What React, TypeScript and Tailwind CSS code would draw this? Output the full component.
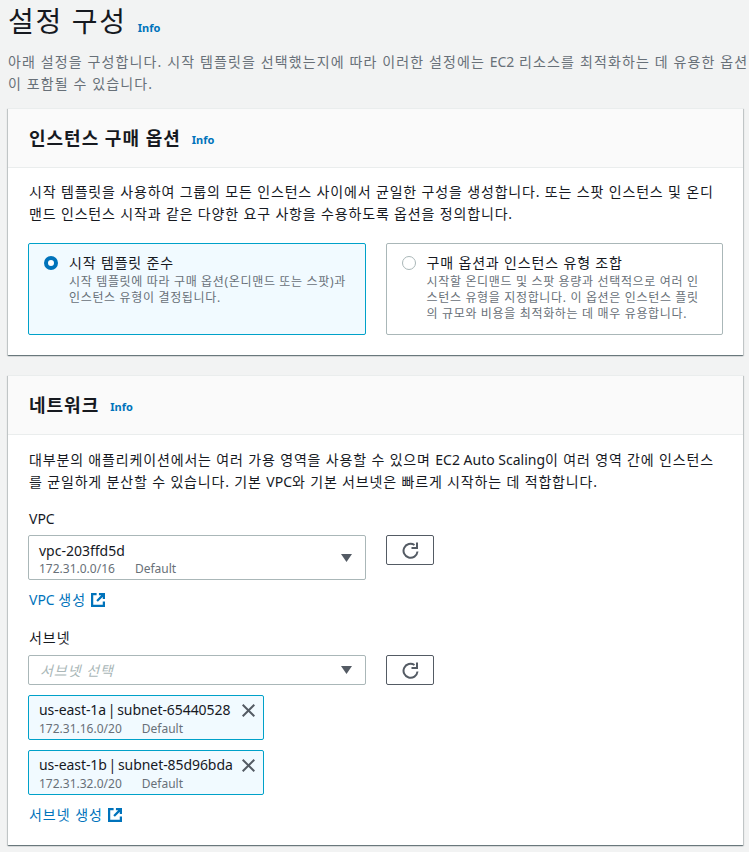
import { ReactNode } from 'react';

// ── Icons ─────────────────────────────────────────────────────────────────────

function RefreshIcon() {
  return (
    <svg width="17" height="17" viewBox="0 0 17 17" fill="none" stroke="#545b64" strokeWidth="2">
      <path d="M15.5 9.5A7 7 0 1 1 12.5 3" />
      <path d="M15 .5V6H9.5" />
    </svg>
  );
}

function ExternalIcon() {
  return (
    <svg width="14" height="14" viewBox="0 0 15 15" fill="none" stroke="#0073bb" strokeWidth="2.4">
      <path d="M6 1.2H1.2v12.6h12.6V9" />
      <path d="M8.5 1.2h5.3v5.3M13.8 1.2 6.5 8.5" />
    </svg>
  );
}

function CaretIcon() {
  return (
    <svg width="11" height="8" viewBox="0 0 11 8" fill="#545b64">
      <path d="M0 0h11L5.5 8z" />
    </svg>
  );
}

function CloseIcon() {
  return (
    <svg width="13" height="13" viewBox="0 0 13 13" fill="none" stroke="#545b64" strokeWidth="2">
      <path d="M.7.7l11.6 11.6M12.3.7.7 12.3" />
    </svg>
  );
}

// ── Sub-components ────────────────────────────────────────────────────────────

function Info({ className }: { className: string }) {
  return <span className={`text-[11px] font-bold text-[#0073bb] ${className}`}>Info</span>;
}

function Card({ title, infoClass, children }: { title: string; infoClass: string; children: ReactNode }) {
  return (
    <section className="mx-2 w-[735px] bg-white border-t border-[#eaeded] shadow-[0_1px_1px_0_rgba(0,28,36,0.4),1px_1px_1px_0_rgba(0,28,36,0.15),-1px_1px_1px_0_rgba(0,28,36,0.15)]">
      <div className="h-[59px] px-[21px] flex items-center bg-[#fafafa] border-b border-[#eaeded]">
        <h2 className="text-[18px] font-bold text-[#16191f] leading-[24px] tracking-[0.055em]">{title}</h2>
        <Info className={infoClass} />
      </div>
      {children}
    </section>
  );
}

function RadioTile({ selected, title, desc }: { selected: boolean; title: string; desc: string[] }) {
  return (
    <div className={`w-[338px] h-[92px] rounded-[2px] border flex pl-[15px] pt-[9px] ${selected ? 'bg-[#f1faff] border-[#00a1c9]' : 'bg-white border-[#aab7b8]'}`}>
      {selected ? (
        <span className="mt-[3px] w-[14px] h-[14px] rounded-full border-[4px] border-[#0073bb] bg-white shrink-0" />
      ) : (
        <span className="mt-[3px] w-[14px] h-[14px] rounded-full border border-[#aab7b8] bg-white shrink-0" />
      )}
      <div className="ml-[11px]">
        <div className="text-[14px] leading-[20px] text-[#16191f] tracking-[0.06em] mb-[1px]">{title}</div>
        {desc.map(line => (
          <div key={line} className="text-[12px] leading-[16px] text-[#687078] whitespace-nowrap tracking-[0.055em]">{line}</div>
        ))}
      </div>
    </div>
  );
}

function RefreshButton() {
  return (
    <button className="ml-[20px] w-[48px] h-[30px] rounded-[2px] border border-[#545b64] bg-white flex items-center justify-center">
      <RefreshIcon />
    </button>
  );
}

function SubnetToken({ name, cidr }: { name: string; cidr: string }) {
  return (
    <div className="w-[236px] h-[45px] rounded-[2px] border border-[#00a1c9] bg-[#f1faff] pl-[10px] flex">
      <div className="w-[203px] pt-[3px]">
        <div className="text-[14px] leading-[22px] text-[#16191f] whitespace-nowrap [word-spacing:-1.8px] tracking-[-0.07px]">{name}</div>
        <div className="mt-[1px] text-[12px] leading-[14px] text-[#687078] flex gap-[20px]">
          <span>{cidr}</span>
          <span>Default</span>
        </div>
      </div>
      <span className="mt-[8px]"><CloseIcon /></span>
    </div>
  );
}

// ── Main page ─────────────────────────────────────────────────────────────────

export default function App() {
  return (
    <div className="w-[749px] h-[852px] overflow-hidden bg-[#f2f3f3] font-['Noto_Sans','Noto_Sans_CJK_KR',sans-serif]">
      {/* Page header */}
      <div className="h-[108px] px-2 pt-[1px]">
        <div className="flex items-center h-[40px]">
          <h1 className="text-[28px] leading-[40px] text-[#16191f] tracking-[0.06em]">설정 구성</h1>
          <Info className="ml-[11px] mt-[14px]" />
        </div>
        <p className="mt-[10px] text-[14px] leading-[22px] text-[#687078] whitespace-nowrap tracking-[0.08em]">
          아래 설정을 구성합니다. 시작 템플릿을 선택했는지에 따라 이러한 설정에는 <span className="tracking-normal">EC2</span> 리소스를 최적화하는 데 유용한 옵션<br />
          이 포함될 수 있습니다.
        </p>
      </div>

      {/* Purchase options */}
      <Card title="인스턴스 구매 옵션" infoClass="ml-[11px] mt-[4px]">
        <div className="px-[20px] pt-[13px] h-[187px]">
          <p className="pl-[1px] text-[14px] leading-[22px] text-[#16191f] whitespace-nowrap tracking-[0.06em]">
            시작 템플릿을 사용하여 그룹의 모든 인스턴스 사이에서 균일한 구성을 생성합니다. 또는 스팟 인스턴스 및 온디<br />
            맨드 인스턴스 시작과 같은 다양한 요구 사항을 수용하도록 옵션을 정의합니다.
          </p>
          <div className="mt-[18px] flex gap-[20px]">
            <RadioTile
              selected
              title="시작 템플릿 준수"
              desc={['시작 템플릿에 따라 구매 옵션(온디맨드 또는 스팟)과', '인스턴스 유형이 결정됩니다.']}
            />
            <RadioTile
              selected={false}
              title="구매 옵션과 인스턴스 유형 조합"
              desc={['시작할 온디맨드 및 스팟 용량과 선택적으로 여러 인', '스턴스 유형을 지정합니다. 이 옵션은 인스턴스 플릿', '의 규모와 비용을 최적화하는 데 매우 유용합니다.']}
            />
          </div>
        </div>
      </Card>

      <div className="h-[20px]" />

      {/* Network */}
      <Card title="네트워크" infoClass="ml-[11px] mt-[4px]">
        <div className="px-[20px] pt-[14px] h-[410px]">
          <p className="pl-[1px] text-[14px] leading-[22px] text-[#16191f] whitespace-nowrap tracking-[0.06em]">
            대부분의 애플리케이션에서는 여러 가용 영역을 사용할 수 있으며 <span className="tracking-normal">EC2 Auto Scaling</span>이 여러 영역 간에 인스턴스<br />
            를 균일하게 분산할 수 있습니다. 기본 <span className="tracking-normal">VPC</span>와 기본 서브넷은 빠르게 시작하는 데 적합합니다.
          </p>

          <label className="block pl-[1px] mt-[16px] text-[14px] leading-[20px] text-[#16191f]">VPC</label>
          <div className="mt-[6px] flex items-start">
            <div className="w-[338px] h-[45px] rounded-[2px] border border-[#aab7b8] bg-white pl-[10px] pr-[13px] flex items-center justify-between">
              <div>
                <div className="text-[14px] leading-[22px] text-[#16191f]">vpc-203ffd5d</div>
                <div className="text-[12px] leading-[14px] text-[#687078] flex gap-[20px]">
                  <span>172.31.0.0/16</span>
                  <span>Default</span>
                </div>
              </div>
              <CaretIcon />
            </div>
            <RefreshButton />
          </div>
          <div className="mt-[10px] pl-[1px] flex items-center gap-[5px] text-[14px] leading-[20px] text-[#0073bb]">
            <span>VPC <span className="tracking-[0.07em]">생성</span></span> <ExternalIcon />
          </div>

          <label className="block pl-[1px] mt-[18px] text-[14px] leading-[20px] text-[#16191f] tracking-[0.07em]">서브넷</label>
          <div className="mt-[7px] flex items-start">
            <div className="w-[338px] h-[30px] rounded-[2px] border border-[#aab7b8] bg-white pl-[11px] pr-[13px] flex items-center justify-between">
              <span className="text-[14px] italic text-[#aab7b8] tracking-[0.07em]">서브넷 선택</span>
              <CaretIcon />
            </div>
            <RefreshButton />
          </div>

          <div className="mt-[10px] flex flex-col gap-[10px]">
            <SubnetToken name="us-east-1a | subnet-65440528" cidr="172.31.16.0/20" />
            <SubnetToken name="us-east-1b | subnet-85d96bda" cidr="172.31.32.0/20" />
          </div>
          <div className="mt-[10px] pl-[1px] flex items-center gap-[5px] text-[14px] leading-[20px] text-[#0073bb] tracking-[0.07em]">
            서브넷 생성 <ExternalIcon />
          </div>
        </div>
      </Card>
    </div>
  );
}
